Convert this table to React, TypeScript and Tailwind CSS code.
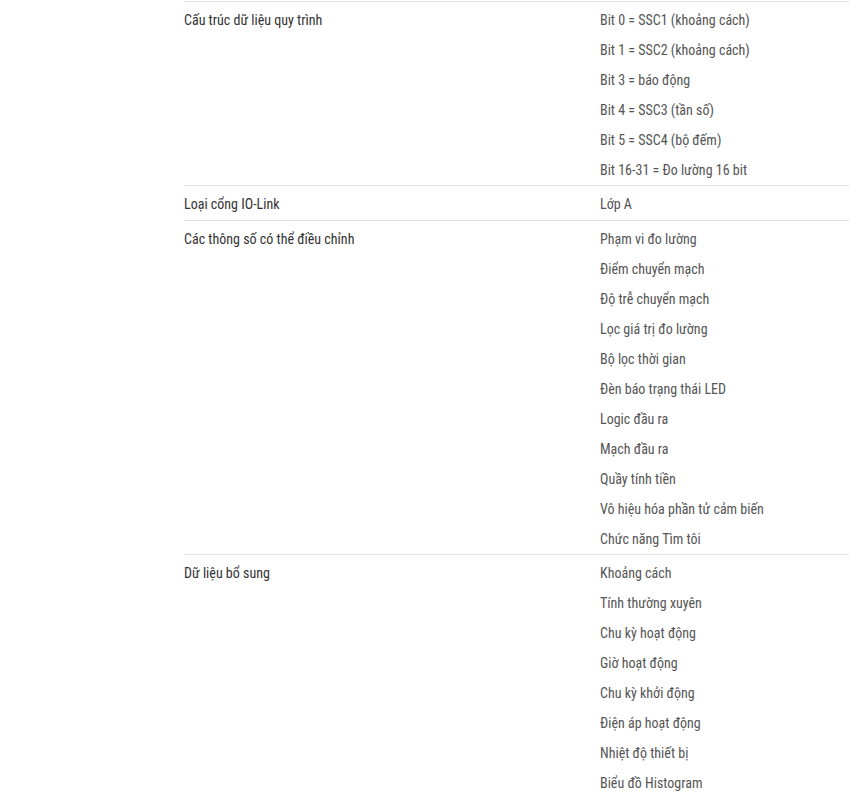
import React from 'react';

type Spec = {
    label: string;
    values: string[];
};

const specs: Spec[] = [
    {
        label: "Cấu trúc dữ liệu quy trình",
        values: [
            "Bit 0 = SSC1 (khoảng cách)",
            "Bit 1 = SSC2 (khoảng cách)",
            "Bit 3 = báo động",
            "Bit 4 = SSC3 (tần số)",
            "Bit 5 = SSC4 (bộ đếm)",
            "Bit 16-31 = Đo lường 16 bit",
        ],
    },
    {
        label: "Loại cổng IO-Link",
        values: ["Lớp A"],
    },
    {
        label: "Các thông số có thể điều chỉnh",
        values: [
            "Phạm vi đo lường",
            "Điểm chuyển mạch",
            "Độ trễ chuyển mạch",
            "Lọc giá trị đo lường",
            "Bộ lọc thời gian",
            "Đèn báo trạng thái LED",
            "Logic đầu ra",
            "Mạch đầu ra",
            "Quầy tính tiền",
            "Vô hiệu hóa phần tử cảm biến",
            "Chức năng Tìm tôi",
        ],
    },
    {
        label: "Dữ liệu bổ sung",
        values: [
            "Khoảng cách",
            "Tính thường xuyên",
            "Chu kỳ hoạt động",
            "Giờ hoạt động",
            "Chu kỳ khởi động",
            "Điện áp hoạt động",
            "Nhiệt độ thiết bị",
            "Biểu đồ Histogram",
        ],
    },
];

const SpecRow: React.FC<{ spec: Spec }> = ({spec}) => {
    return (
        <div className="flex border-t border-[#e2e2e2] pt-[3px]">
            <div className="w-[416px] shrink-0 pb-px leading-[30px] text-[#333333]">{spec.label}</div>
            <div className="flex flex-col text-[#555555]">
                {spec.values.map((value) => (
                    <div key={value} className="leading-[30px]">{value}</div>
                ))}
            </div>
        </div>
    );
};

const App: React.FC = () => {
    return (
        <div className="min-h-screen bg-white pt-px pl-[184px] text-[14px] font-['Roboto','Liberation_Sans',sans-serif] font-stretch-[75%]">
            {specs.map((spec) => (
                <SpecRow key={spec.label} spec={spec}/>
            ))}
        </div>
    );
};

export default App
